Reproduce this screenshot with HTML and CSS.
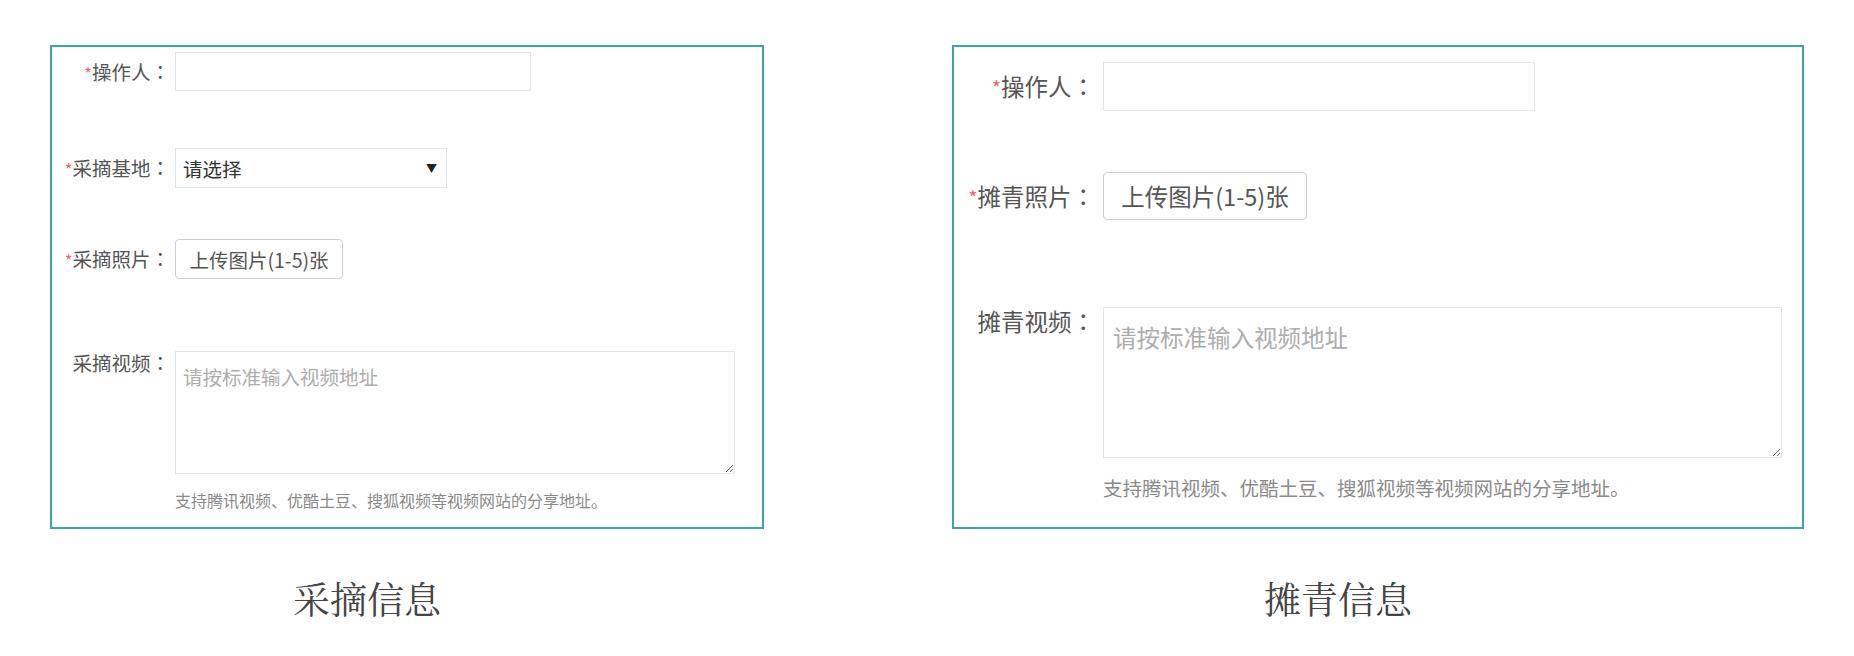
FILE: index.html
```html
<!DOCTYPE html>
<html lang="zh-CN">
<head>
<meta charset="utf-8">
<title>采摘信息 / 摊青信息</title>
<link rel="stylesheet" href="styles.css">
</head>
<body>
<div class="page">
  <section class="panel panel--pick">
    <form class="card">
      <div class="row row--operator">
        <label class="label"><span class="req">*</span>操作人<span class="colon" lang="zh-TW">：</span></label>
        <input class="field field--text" type="text">
      </div>
      <div class="row row--base">
        <label class="label"><span class="req">*</span>采摘基地<span class="colon" lang="zh-TW">：</span></label>
        <div class="field field--select" role="combobox"><span class="select-text">请选择</span><span class="select-arrow">▼</span></div>
      </div>
      <div class="row row--photo">
        <label class="label"><span class="req">*</span>采摘照片<span class="colon" lang="zh-TW">：</span></label>
        <button class="upload" type="button">上传图片(1-5)张</button>
      </div>
      <div class="row row--video">
        <label class="label">采摘视频<span class="colon" lang="zh-TW">：</span></label>
        <textarea class="field field--area" placeholder="请按标准输入视频地址"></textarea>
      </div>
      <p class="help">支持腾讯视频、优酷土豆、搜狐视频等视频网站的分享地址。</p>
    </form>
    <p class="caption">采摘信息</p>
  </section>

  <section class="panel panel--spread">
    <form class="card">
      <div class="row row--operator">
        <label class="label"><span class="req">*</span>操作人<span class="colon" lang="zh-TW">：</span></label>
        <input class="field field--text" type="text">
      </div>
      <div class="row row--photo">
        <label class="label"><span class="req">*</span>摊青照片<span class="colon" lang="zh-TW">：</span></label>
        <button class="upload" type="button">上传图片(1-5)张</button>
      </div>
      <div class="row row--video">
        <label class="label">摊青视频<span class="colon" lang="zh-TW">：</span></label>
        <textarea class="field field--area" placeholder="请按标准输入视频地址"></textarea>
      </div>
      <p class="help">支持腾讯视频、优酷土豆、搜狐视频等视频网站的分享地址。</p>
    </form>
    <p class="caption">摊青信息</p>
  </section>
</div>
</body>
</html>
```

FILE: styles.css
```css
* { box-sizing: border-box; }

html, body {
  margin: 0;
  background: #ffffff;
}

body {
  font-family: "Noto Sans CJK SC", "Microsoft YaHei", sans-serif;
  color: #555;
}

.page {
  display: flex;
  align-items: flex-start;
  gap: 188px;
  padding: 45px 0 0 50px;
}

.panel {
  display: flex;
  flex-direction: column;
}

/* ---- size variants ---- */
.panel--pick {
  width: 714px;
  --fs: 19.5px;
  --label-w: 118px;
  --gap: 5px;
  --pad-top: 5px;
  --input-w: 356px;
  --input-h: 39px;
  --btn-w: 168px;
  --btn-h: 40px;
  --area-w: 560px;
  --area-h: 123px;
  --area-pad: 10px 7px;
  --help-fs: 16px;
  --help-lh: 22px;
  --help-mt: 15px;
}

.panel--spread {
  width: 852px;
  --fs: 23.5px;
  --label-w: 141px;
  --gap: 8px;
  --pad-top: 15px;
  --input-w: 432px;
  --input-h: 49px;
  --btn-w: 204px;
  --btn-h: 48px;
  --area-w: 679px;
  --area-h: 151px;
  --area-pad: 12px 9px;
  --help-fs: 19.5px;
  --help-lh: 26px;
  --help-mt: 17px;
}

.card {
  height: 484px;
  margin: 0;
  border: 2px solid #3ba6a4;
  padding-top: var(--pad-top);
  display: flex;
  flex-direction: column;
  font-size: var(--fs);
}

.row {
  display: flex;
  align-items: center;
  gap: var(--gap);
}

.panel--pick .row--operator { margin-bottom: 57px; }
.panel--pick .row--base { margin-bottom: 51px; }
.panel--pick .row--photo { margin-bottom: 72px; }

.panel--spread .row--operator { margin-bottom: 61px; }
.panel--spread .row--photo { margin-bottom: 87px; }

.row--video { align-items: flex-start; }

.label {
  flex: none;
  width: var(--label-w);
  text-align: right;
  line-height: 1.2;
  color: #555;
  white-space: nowrap;
}

.colon {
  font-family: "Noto Sans CJK TC", "Noto Sans CJK JP", sans-serif;
}

.req {
  color: #f0646c;
  font-size: 0.85em;
}

.field {
  font-family: inherit;
  font-size: var(--fs);
  border: 1px solid #e1e4e8;
  background: #fff;
  border-radius: 0;
  margin: 0;
  outline: none;
}

.field--text {
  width: var(--input-w);
  height: var(--input-h);
  padding: 0 7px;
}

.field--select {
  width: 272px;
  height: 40px;
  display: flex;
  align-items: center;
  justify-content: space-between;
  padding: 0 9px 0 7px;
  color: #333;
}

.select-arrow {
  font-size: 11px;
  color: #222;
}

.upload {
  width: var(--btn-w);
  height: var(--btn-h);
  font-family: inherit;
  font-size: var(--fs);
  color: #555;
  background: #fff;
  border: 1px solid #cfcfcf;
  border-radius: 4px;
  padding: 0;
  margin: 0;
  white-space: nowrap;
}

.field--area {
  width: var(--area-w);
  height: var(--area-h);
  padding: var(--area-pad);
  line-height: 1.5;
  resize: both;
  color: #555;
}

.field--area::placeholder {
  color: #adadad;
}

.help {
  margin: var(--help-mt) 0 0 calc(var(--label-w) + var(--gap));
  font-size: var(--help-fs);
  line-height: var(--help-lh);
  color: #8a8a8a;
  white-space: nowrap;
}

.caption {
  margin: 47px 0 0;
  padding-right: 80px;
  text-align: center;
  font-family: "Noto Serif CJK SC", "Source Han Serif SC", "AR PL UMing CN", "Liberation Serif", serif;
  font-size: 37px;
  line-height: 1.2;
  color: #444;
}
```
